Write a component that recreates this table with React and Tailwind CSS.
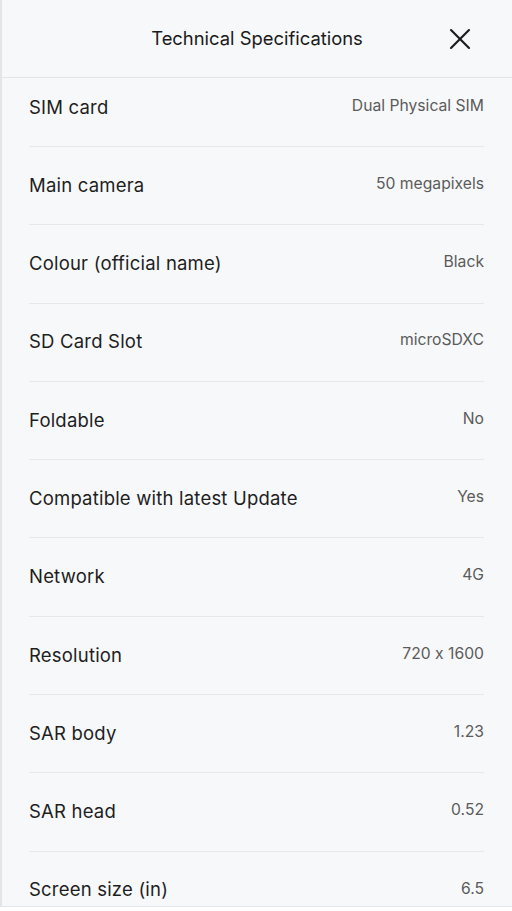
import { X } from "lucide-react";

const specs = [
    ["SIM card", "Dual Physical SIM"],
    ["Main camera", "50 megapixels"],
    ["Colour (official name)", "Black"],
    ["SD Card Slot", "microSDXC"],
    ["Foldable", "No"],
    ["Compatible with latest Update", "Yes"],
    ["Network", "4G"],
    ["Resolution", "720 x 1600"],
    ["SAR body", "1.23"],
    ["SAR head", "0.52"],
    ["Screen size (in)", "6.5"],
];

const App = () => {
    return (
        <div className="w-full h-[911px] bg-white [font-feature-settings:'calt'_0]" style={{ fontFamily: "Inter, 'Noto Sans', sans-serif" }}>
            <div className="h-[907px] flex flex-col bg-[#f7f8fa] border-l-2 border-b border-[#e3e5e9] overflow-hidden">
                <header className="h-[78px] shrink-0 grid grid-cols-[1fr_auto_1fr] items-center border-b border-[#e3e5e9]">
                    <div />
                    <h1 className="text-[18.4px] text-[#1b1b1b] pt-[1px]">Technical Specifications</h1>
                    <div className="flex justify-end pr-[34px]">
                        <button className="text-[#1b1b1b]">
                            <X size={36} strokeWidth={1.4} />
                        </button>
                    </div>
                </header>

                <ul className="mx-[28px] ml-[27px]">
                    {specs.map(([label, value], i) => (
                        <li
                            key={label}
                            className={`flex items-center justify-between shrink-0 ${i === 0 ? "h-[68px] pb-[9px]" : "h-[78.3px] border-t border-[#e6e8ec]"}`}
                        >
                            <span className="text-[18.5px] tracking-[0.2px] text-[#1e1e1e]">{label}</span>
                            <span className="text-[15.7px] text-[#5b5b5b] mb-[4px]">{value}</span>
                        </li>
                    ))}
                </ul>
            </div>
        </div>
    );
};

export default App;
